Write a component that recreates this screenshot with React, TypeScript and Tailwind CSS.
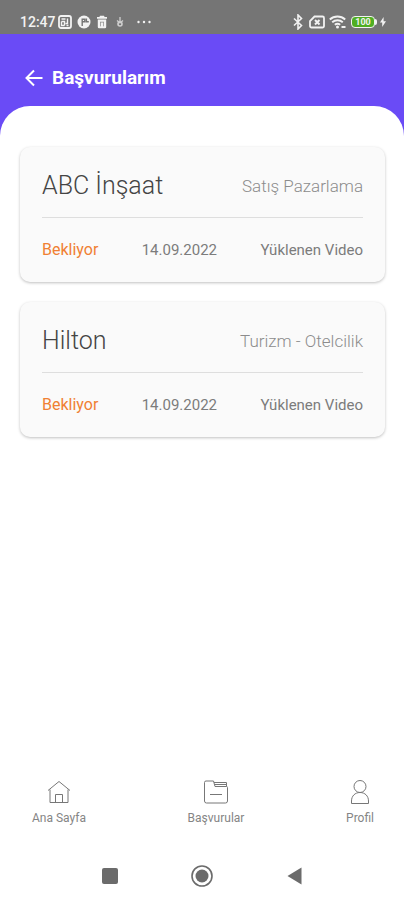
import type { ReactNode } from "react";

type Application = {
  company: string;
  date: string;
  sector: string;
  status: string;
};

const applications: Application[] = [
  {
    company: "ABC İnşaat",
    date: "14.09.2022",
    sector: "Satış Pazarlama",
    status: "Bekliyor",
  },
  {
    company: "Hilton",
    date: "14.09.2022",
    sector: "Turizm - Otelcilik",
    status: "Bekliyor",
  },
];

function StatusBar() {
  return (
    <div className="flex h-[34px] items-end justify-between bg-[#757575] pr-[18px] pb-1 pl-5 text-[#f2f2f2]">
      <div className="flex items-center">
        <span className="text-sm leading-4 font-medium">12:47</span>
        <svg className="ml-0.5 size-3.5" fill="none" viewBox="0 0 14 14">
          <rect height="12" rx="2" stroke="currentColor" strokeWidth="1.8" width="12" x="1" y="1" />
          <path d="M3.5 4h4M3.5 6.5h3v4M3.5 6.5v4h3M9.5 3.5v5h-2M10.5 10.5h-2" stroke="currentColor" strokeWidth="1.4" />
        </svg>
        <svg className="ml-[5px] size-3.5" viewBox="0 0 14 14">
          <circle cx="7" cy="7" fill="currentColor" r="6.5" />
          <path d="M5.2 11V4.2h2.6v2.6H5.2M9.4 3.5v3.2h2.4" fill="none" stroke="#757575" strokeWidth="1.4" />
        </svg>
        <svg className="ml-[5px] h-3.5 w-3" viewBox="0 0 12 14">
          <path d="M4 .8h4l.6 1.2H11v1.8H1V2h2.4zM1.8 4.5h8.4V12a1.3 1.3 0 0 1-1.3 1.3H3.1A1.3 1.3 0 0 1 1.8 12z" fill="currentColor" />
          <path d="M4.5 6.8v4.500M7.500 6.800v4.500M4.500 7.200h3" stroke="#757575" strokeWidth=".6" />
        </svg>
        <svg className="ml-[7px] h-3.5 w-2.5 text-[#cfcfcf]" fill="none" viewBox="0 0 10 14">
          <path d="M5 2v5M2 5.5l3 2.5 3-2.5" stroke="currentColor" strokeWidth="1.3" />
          <circle cx="5" cy="9" r="2" stroke="currentColor" strokeWidth="1.6" />
        </svg>
        <svg className="ml-3 h-3.5 w-4" fill="currentColor" viewBox="0 0 16 14">
          <circle cx="1.500" cy="7" r="1.200" />
          <circle cx="7" cy="7" r="1.200" />
          <circle cx="12.500" cy="7" r="1.200" />
        </svg>
      </div>
      <div className="flex items-center">
        <svg className="h-4 w-2.5" fill="none" viewBox="0 0 10 16">
          <path d="M1 4.5l7.5 7L5 15V1l3.500 3.500-7.500 7" stroke="currentColor" strokeWidth="1.6" />
        </svg>
        <svg className="ml-1.5 h-3.5 w-4" fill="none" viewBox="0 0 16 14">
          <path d="M5.5 1.5h8A1.5 1.5 0 0 1 15 3v8a1.5 1.5 0 0 1-1.5 1.5h-11A1.5 1.5 0 0 1 1 11V6z" stroke="currentColor" strokeWidth="1.8" />
          <path d="M6 5l4.5 4.5M10.5 5L6 9.5" stroke="currentColor" strokeWidth="2" />
        </svg>
        <svg className="ml-1 h-3.5 w-[18px]" fill="none" viewBox="0 0 18 14">
          <path d="M.8 4.500a11.500 11.500 0 0 1 15.400 0M3.200 7.200a8 8 0 0 1 10.600 0M5.800 9.800a4.500 4.500 0 0 1 5.400 0" stroke="currentColor" strokeWidth="1.900" />
          <circle cx="8.500" cy="12" fill="currentColor" r="1.500" />
          <path d="M12.500 12h4" stroke="currentColor" strokeWidth="2" />
        </svg>
        <div className="ml-1 flex items-center">
          <span className="flex h-3 w-6 items-center justify-center rounded-sm border border-[#f2f2f2] bg-[#4fae22] text-[9px] leading-none font-bold">
            100
          </span>
          <span className="h-1.5 w-0.5 rounded-r-sm bg-[#f2f2f2]" />
        </div>
        <svg className="ml-[3px] h-3 w-1.5" fill="currentColor" viewBox="0 0 6 12">
          <path d="M3.600 1L0 6.500h2.200V11L6 5.300H3.600z" />
        </svg>
      </div>
    </div>
  );
}

function ApplicationCard({ company, date, sector, status }: Application) {
  return (
    <article className="rounded-[10px] bg-[#fafafa] px-[22px] shadow-[0_1px_3px_rgba(0,0,0,0.25)]">
      <div className="flex h-[71px] items-center justify-between border-b border-[#dedede] pt-2">
        <h2 className="text-[25px] leading-8 font-light text-[#444444]">{company}</h2>
        <p className="text-[17px] leading-6 font-light text-[#8c8c8c]">{sector}</p>
      </div>
      <div className="flex h-16 items-center justify-between text-[15px] leading-5 text-[#7c7c7c]">
        <p className="text-base leading-5 text-[#f08033]">{status}</p>
        <time dateTime="2022-09-14">{date}</time>
        <a href="#video">Yüklenen Video</a>
      </div>
    </article>
  );
}

function NavItem({ children, href, label }: { children: ReactNode; href: string; label: string }) {
  return (
    <a className="flex flex-col items-center gap-1.5" href={href}>
      <svg className="size-6 text-[#777777]" fill="none" stroke="currentColor" viewBox="0 0 24 24">
        {children}
      </svg>
      <span className="text-xs leading-4 text-[#858585]">{label}</span>
    </a>
  );
}

function SystemButtons() {
  return (
    <div className="flex h-12 items-center justify-center gap-[68px] text-[#6b6b6b]">
      <button aria-label="Son uygulamalar" type="button">
        <svg className="size-6" fill="currentColor" viewBox="0 0 24 24">
          <rect height="16" rx="2" width="16" x="4" y="4" />
        </svg>
      </button>
      <button aria-label="Ana ekran" type="button">
        <svg className="size-6" fill="none" viewBox="0 0 24 24">
          <circle cx="12" cy="12" r="10" stroke="currentColor" strokeWidth="1.6" />
          <circle cx="12" cy="12" fill="currentColor" r="6.5" />
        </svg>
      </button>
      <button aria-label="Geri" type="button">
        <svg className="size-6" fill="currentColor" viewBox="0 0 24 24">
          <path d="M19.500 3.500v17L5.500 12z" />
        </svg>
      </button>
    </div>
  );
}

export default function App() {
  return (
    <div className="flex min-h-screen flex-col bg-[#6a4bf6] font-[Roboto,sans-serif]">
      <StatusBar />
      <header className="flex h-[72px] items-center gap-2 px-6 pt-4 text-white">
        <button aria-label="Geri dön" type="button">
          <svg className="size-5" fill="none" stroke="currentColor" strokeWidth="2" viewBox="0 0 20 20">
            <path d="M18.5 10H3M10 2.5L2.5 10l7.5 7.5" />
          </svg>
        </button>
        <h1 className="text-[19px] leading-6 font-bold">Başvurularım</h1>
      </header>
      <main className="flex grow flex-col gap-5 rounded-t-[30px] bg-white pt-[41px] pr-[19px] pl-5">
        {applications.map((application) => (
          <ApplicationCard key={application.company} {...application} />
        ))}
      </main>
      <footer className="bg-white">
        <nav className="flex justify-between pr-[30px] pb-[26px] pl-8">
          <NavItem href="#home" label="Ana Sayfa">
            <path d="M1 10.5L12 1.5l11 9M3 9.500v13h18v-13M8.500 22.500v-8h7v8" />
          </NavItem>
          <NavItem href="#applications" label="Başvurular">
            <path d="M.5 2.5A1.5 1.5 0 0 1 2 1h7.5L11 6.5h11.500a1 1 0 0 1 1 1V21a2 2 0 0 1-2 2h-19a2 2 0 0 1-2-2zM10 2.500h12.500v4M10.500 4.500h12M6 14.500h12" />
          </NavItem>
          <NavItem href="#profile" label="Profil">
            <circle cx="12" cy="6.5" r="6" />
            <path d="M3.5 23.5V21c0-5 3.500-8.500 8.500-8.500s8.500 3.500 8.500 8.500v2.500z" />
          </NavItem>
        </nav>
        <SystemButtons />
      </footer>
    </div>
  );
}
